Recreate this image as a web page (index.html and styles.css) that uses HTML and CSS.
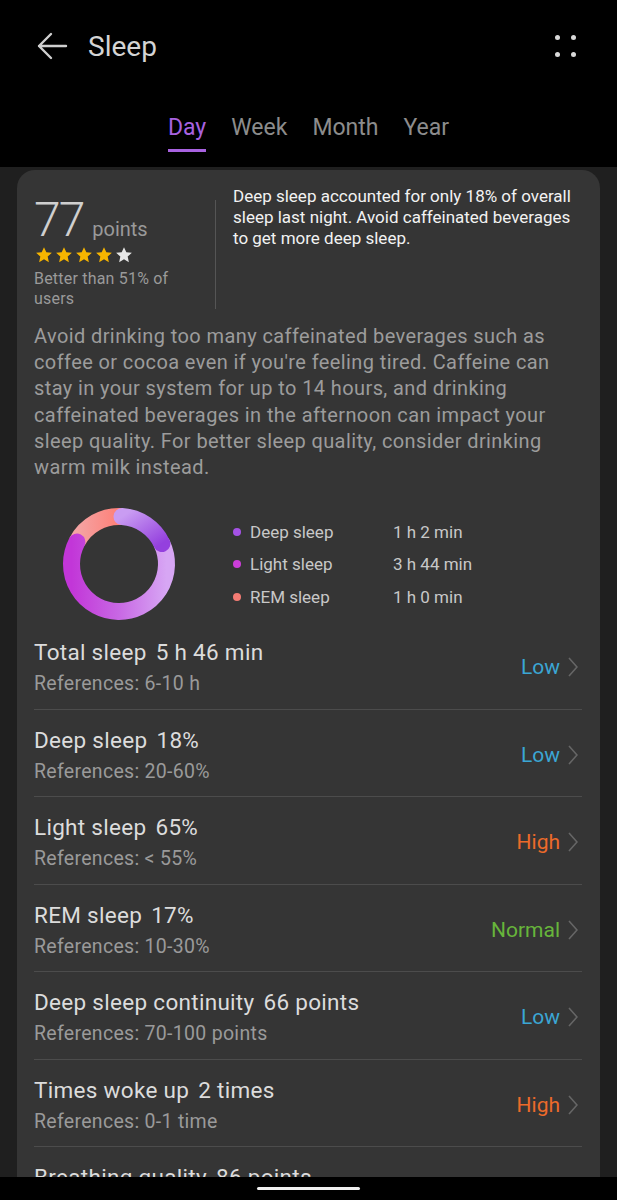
FILE: index.html
```html
<!DOCTYPE html>
<html>

<head>
    <meta charset="UTF-8">
    <meta name="viewport" content="width=device-width, initial-scale=1.0">
    <title>Sleep</title>

    <link rel="stylesheet" href="styles.css">
</head>

<body>
    <div class="top-bar">
        <div class="title-row">
            <svg class="back-icon" width="32" height="28" viewBox="0 0 32 28">
                <path d="M30 14 H3 M15 2 L3 14 L15 26" fill="none" stroke="#cfcfcf" stroke-width="2.4" stroke-linecap="round" stroke-linejoin="round" />
            </svg>
            <h1>Sleep</h1>
            <div class="more-icon">
                <span></span><span></span><span></span><span></span>
            </div>
        </div>

        <!-- period tabs -->
        <div class="tabs">
            <div class="tab active">Day</div>
            <div class="tab">Week</div>
            <div class="tab">Month</div>
            <div class="tab">Year</div>
        </div>
    </div>

    <div class="page">
        <div class="card">
            <div class="summary">
                <div class="score">
                    <div class="score-line"><span class="score-num">77</span><span class="score-unit">points</span></div>
                    <div class="stars">
                        <svg class="star on" viewBox="0 0 24 24"><path d="M12 1.5 L15.1 8.4 L22.5 9.1 L16.9 14.1 L18.5 21.5 L12 17.6 L5.5 21.5 L7.1 14.1 L1.5 9.1 L8.9 8.4 Z" /></svg>
                        <svg class="star on" viewBox="0 0 24 24"><path d="M12 1.5 L15.1 8.4 L22.5 9.1 L16.9 14.1 L18.5 21.5 L12 17.6 L5.5 21.5 L7.1 14.1 L1.5 9.1 L8.9 8.4 Z" /></svg>
                        <svg class="star on" viewBox="0 0 24 24"><path d="M12 1.5 L15.1 8.4 L22.5 9.1 L16.9 14.1 L18.5 21.5 L12 17.6 L5.5 21.5 L7.1 14.1 L1.5 9.1 L8.9 8.4 Z" /></svg>
                        <svg class="star on" viewBox="0 0 24 24"><path d="M12 1.5 L15.1 8.4 L22.5 9.1 L16.9 14.1 L18.5 21.5 L12 17.6 L5.5 21.5 L7.1 14.1 L1.5 9.1 L8.9 8.4 Z" /></svg>
                        <svg class="star" viewBox="0 0 24 24"><path d="M12 1.5 L15.1 8.4 L22.5 9.1 L16.9 14.1 L18.5 21.5 L12 17.6 L5.5 21.5 L7.1 14.1 L1.5 9.1 L8.9 8.4 Z" /></svg>
                    </div>
                    <p class="rank">Better than 51% of users</p>
                </div>
                <p class="headline">Deep sleep accounted for only 18% of overall sleep last night. Avoid caffeinated beverages to get more deep sleep.</p>
            </div>

            <p class="advice">Avoid drinking too many caffeinated beverages such as coffee or cocoa even if you're feeling tired. Caffeine can stay in your system for up to 14 hours, and drinking caffeinated beverages in the afternoon can impact your sleep quality. For better sleep quality, consider drinking warm milk instead.</p>

            <div class="chart">
                <svg class="donut" width="120" height="120" viewBox="0 0 120 120">
                    <defs>
                        <linearGradient id="remGrad" x1="0" y1="0" x2="1" y2="0">
                            <stop offset="0" stop-color="#f4a4a4" />
                            <stop offset="1" stop-color="#ff7d74" />
                        </linearGradient>
                        <linearGradient id="deepGrad" x1="0" y1="0" x2="1" y2="1">
                            <stop offset="0" stop-color="#c99cf2" />
                            <stop offset="1" stop-color="#9440de" />
                        </linearGradient>
                        <linearGradient id="lightGrad" x1="1" y1="0" x2="0" y2="0">
                            <stop offset="0" stop-color="#d7a6f4" />
                            <stop offset="0.5" stop-color="#c868e4" />
                            <stop offset="1" stop-color="#c236d8" />
                        </linearGradient>
                    </defs>
                    <path d="M18.06 37.7 A47.5 47.5 0 0 1 63 12.6" fill="none" stroke="url(#remGrad)" stroke-width="17" />
                    <path d="M102.87 39.55 A47.5 47.5 0 1 1 17.9 38" fill="none" stroke="url(#lightGrad)" stroke-width="17" stroke-linecap="round" />
                    <path d="M63 12.6 A47.5 47.5 0 0 1 102.87 39.55" fill="none" stroke="url(#deepGrad)" stroke-width="17" stroke-linecap="round" />
                </svg>

                <div class="legend">
                    <div class="legend-row"><span class="dot deep"></span><span class="legend-name">Deep sleep</span><span>1 h 2 min</span></div>
                    <div class="legend-row"><span class="dot light"></span><span class="legend-name">Light sleep</span><span>3 h 44 min</span></div>
                    <div class="legend-row"><span class="dot rem"></span><span class="legend-name">REM sleep</span><span>1 h 0 min</span></div>
                </div>
            </div>

            <!-- detail rows -->
            <div class="metric">
                <div class="metric-text">
                    <div class="metric-title">Total sleep<span class="metric-value">5 h 46 min</span></div>
                    <div class="metric-ref">References: 6-10 h</div>
                </div>
                <span class="status low">Low</span>
                <svg class="chevron" width="10" height="20" viewBox="0 0 10 20"><path d="M1 1 L9 10 L1 19" fill="none" stroke="#666" stroke-width="1.6" /></svg>
            </div>
            <div class="metric">
                <div class="metric-text">
                    <div class="metric-title">Deep sleep<span class="metric-value">18%</span></div>
                    <div class="metric-ref">References: 20-60%</div>
                </div>
                <span class="status low">Low</span>
                <svg class="chevron" width="10" height="20" viewBox="0 0 10 20"><path d="M1 1 L9 10 L1 19" fill="none" stroke="#666" stroke-width="1.6" /></svg>
            </div>
            <div class="metric">
                <div class="metric-text">
                    <div class="metric-title">Light sleep<span class="metric-value">65%</span></div>
                    <div class="metric-ref">References: &lt; 55%</div>
                </div>
                <span class="status high">High</span>
                <svg class="chevron" width="10" height="20" viewBox="0 0 10 20"><path d="M1 1 L9 10 L1 19" fill="none" stroke="#666" stroke-width="1.6" /></svg>
            </div>
            <div class="metric">
                <div class="metric-text">
                    <div class="metric-title">REM sleep<span class="metric-value">17%</span></div>
                    <div class="metric-ref">References: 10-30%</div>
                </div>
                <span class="status normal">Normal</span>
                <svg class="chevron" width="10" height="20" viewBox="0 0 10 20"><path d="M1 1 L9 10 L1 19" fill="none" stroke="#666" stroke-width="1.6" /></svg>
            </div>
            <div class="metric">
                <div class="metric-text">
                    <div class="metric-title">Deep sleep continuity<span class="metric-value">66 points</span></div>
                    <div class="metric-ref">References: 70-100 points</div>
                </div>
                <span class="status low">Low</span>
                <svg class="chevron" width="10" height="20" viewBox="0 0 10 20"><path d="M1 1 L9 10 L1 19" fill="none" stroke="#666" stroke-width="1.6" /></svg>
            </div>
            <div class="metric">
                <div class="metric-text">
                    <div class="metric-title">Times woke up<span class="metric-value">2 times</span></div>
                    <div class="metric-ref">References: 0-1 time</div>
                </div>
                <span class="status high">High</span>
                <svg class="chevron" width="10" height="20" viewBox="0 0 10 20"><path d="M1 1 L9 10 L1 19" fill="none" stroke="#666" stroke-width="1.6" /></svg>
            </div>
            <div class="metric">
                <div class="metric-text">
                    <div class="metric-title">Breathing quality<span class="metric-value">86 points</span></div>
                    <div class="metric-ref">References: 70-100 points</div>
                </div>
            </div>
        </div>
    </div>

    <div class="nav-bar"><span class="home-pill"></span></div>
</body>

</html>
```

FILE: styles.css
```css
body {
    margin: 0;
    font-family: Roboto, "Noto Sans", sans-serif;
    background-color: #1f1f1f;
    height: 1200px;
    overflow: hidden;
}

.top-bar {
    background-color: #000;
    height: 167px;
}

.title-row {
    display: flex;
    align-items: center;
    height: 92px;
    padding: 0 41px 0 36px;
}

.back-icon {
    margin-right: 20px;
}

.title-row h1 {
    flex: 1;
    margin: 0;
    font-size: 28px;
    font-weight: 400;
    color: #d4d4d4;
}

.more-icon {
    display: grid;
    grid-template-columns: 5px 5px;
    gap: 12px 11px;
}

.more-icon span {
    width: 5px;
    height: 5px;
    border-radius: 50%;
    background: #d8d8d8;
}

.tabs {
    display: flex;
    justify-content: center;
    gap: 25px;
    padding-top: 22px;
}

.tab {
    font-size: 23px;
    color: #8c8c8c;
    padding-bottom: 8px;
    border-bottom: 3px solid transparent;
}

.tab.active {
    color: #a862e0;
    border-bottom-color: #a862e0;
}

.page {
    padding: 3px 17px 0;
}

.card {
    background-color: #353535;
    border-radius: 18px;
    padding: 24px 18px 0 17px;
    height: 1100px;
}

.summary {
    display: flex;
    align-items: flex-start;
}

.score {
    width: 181px;
    border-right: 1px solid #555;
    margin-top: 6px;
    margin-right: 17px;
}

.score-line {
    display: flex;
    align-items: baseline;
    height: 44px;
}

.score-num {
    font-size: 48px;
    font-weight: 300;
    color: #cfcfcf;
    line-height: 40px;
    letter-spacing: -2px;
}

.score-unit {
    font-size: 20px;
    color: #9a9a9a;
    margin-left: 9px;
}

.stars {
    display: flex;
    gap: 2px;
    height: 22px;
    align-items: center;
    margin-left: 1px;
}

.star {
    width: 18px;
    height: 18px;
    fill: #e6e6e6;
}

.star.on {
    fill: #f7b500;
}

.rank {
    margin: 3px 0 0;
    font-size: 16px;
    line-height: 20px;
    letter-spacing: 0.2px;
    color: #9a9a9a;
    width: 150px;
}

.headline {
    margin: 0;
    font-size: 17px;
    line-height: 21px;
    color: #f2f2f2;
    flex: 1;
    margin-top: -8px;
}

.advice {
    margin: 14px 0 0;
    font-size: 20px;
    line-height: 26.2px;
    letter-spacing: 0.4px;
    color: #9c9c9c;
}

.chart {
    display: flex;
    align-items: center;
    margin-top: 24px;
    margin-bottom: -2px;
    padding-left: 25px;
}

.legend {
    margin-left: 54px;
}

.legend-row {
    display: flex;
    align-items: center;
    height: 32.5px;
    font-size: 17px;
    color: #c8c8c8;
}

.dot {
    width: 8px;
    height: 8px;
    border-radius: 50%;
    margin-right: 9px;
}

.dot.deep {
    background: #a552e6;
}

.dot.light {
    background: #cc3ed9;
}

.dot.rem {
    background: #f47c74;
}

.legend-name {
    width: 143px;
}

.metric {
    display: flex;
    align-items: center;
    padding: 15px 0 11.5px;
    border-bottom: 1px solid #4c4c4c;
}

.metric-text {
    flex: 1;
}

.metric-title {
    font-size: 22.5px;
    line-height: 30px;
    letter-spacing: 0.3px;
    color: #dcdcdc;
}

.metric-value {
    margin-left: 9px;
}

.metric-ref {
    font-size: 19.5px;
    line-height: 26px;
    letter-spacing: 0.3px;
    color: #9a9a9a;
    margin-top: 4px;
}

.status {
    font-size: 21px;
    margin-right: 8px;
}

.status.low {
    color: #3ba6d4;
}

.status.high {
    color: #ec6a2a;
}

.status.normal {
    color: #67b53b;
}

.chevron {
    margin-right: 4px;
}

.nav-bar {
    position: fixed;
    left: 0;
    bottom: 0;
    width: 100%;
    height: 23px;
    background: #000;
    display: flex;
    justify-content: center;
    align-items: center;
}

.home-pill {
    width: 103px;
    height: 3px;
    background: #f0f0f0;
    border-radius: 2px;
}
```
